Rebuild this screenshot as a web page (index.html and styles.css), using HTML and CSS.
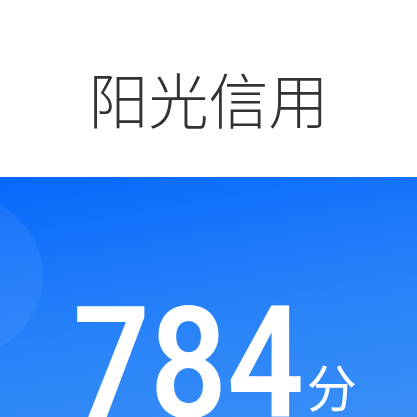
FILE: index.html
```html
<!DOCTYPE html>
<html lang="zh-CN">
<head>
<meta charset="utf-8">
<title>阳光信用</title>
<link rel="stylesheet" href="styles.css">
</head>
<body>
<header class="header">
  <h1 class="title">阳光信用</h1>
</header>
<section class="score-card">
  <div class="score">
    <span class="score-value">784</span>
    <span class="score-unit">分</span>
  </div>
</section>
</body>
</html>
```

FILE: styles.css
```css
html, body {
  margin: 0;
  padding: 0;
  background: #ffffff;
}
body {
  width: 417px;
  height: 417px;
  overflow: hidden;
  font-family: "Noto Sans CJK SC", "Noto Sans", sans-serif;
}
.header {
  height: 177px;
  box-sizing: border-box;
  padding-top: 18px;
  display: flex;
  align-items: center;
  justify-content: center;
  background: #ffffff;
}
.title {
  margin: 0;
  font-size: 60px;
  font-weight: 300;
  color: #333333;
  line-height: 1;
}
.score-card {
  position: relative;
  height: 240px;
  overflow: hidden;
  background: linear-gradient(170deg, #0768fb 0%, #2a84f8 60%, #3a8ff6 100%);
}
.score-card::before {
  content: "";
  position: absolute;
  left: -117px;
  top: 19px;
  width: 160px;
  height: 160px;
  border-radius: 50%;
  background: rgba(255, 255, 255, 0.06);
}
.score {
  position: relative;
  display: flex;
  align-items: flex-end;
  padding-top: 110px;
  padding-left: 73px;
  color: #ffffff;
}
.score-value {
  display: inline-block;
  font-family: Roboto, "Liberation Sans", sans-serif;
  font-weight: 600;
  font-size: 155px;
  line-height: 1;
  transform: scaleX(0.87);
  transform-origin: left center;
  margin-right: -34px;
}
.score-unit {
  font-family: "Noto Sans CJK SC", sans-serif;
  font-size: 50px;
  font-weight: 400;
  line-height: 1;
  margin-left: 2px;
  margin-bottom: 32px;
}
```
